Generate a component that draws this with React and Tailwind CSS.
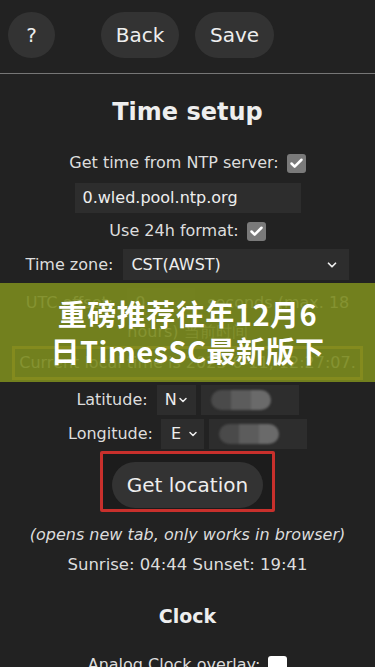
import { ChevronDown, Check } from "lucide-react"

function Btn({ children, className = "" }) {
    return (
        <button className={"h-[46px] rounded-full bg-[#333] text-[20px] text-[#eee] " + className}>
            {children}
        </button>
    )
}

function Box({ checked }) {
    return (
        <span className={"inline-flex h-[19px] w-[19px] items-center justify-center rounded-[3px] " + (checked ? "bg-[#7a7a7a]" : "bg-white")}>
            {checked && <Check size={15} strokeWidth={4} color="#fff" />}
        </span>
    )
}

// blurred coordinate value
function Blur({ w }) {
    return (
        <div className="flex h-[30px] items-center bg-[#2d2d2d] pl-[10px]" style={{ width: w }}>
            <div className="flex h-[20px] w-[60px] overflow-hidden rounded-full blur-[1px]">
                <div className="w-[20px] bg-[#4a4a4a]" />
                <div className="w-[20px] bg-[#5c5c5c]" />
                <div className="w-[20px] bg-[#6a6a6a]" />
            </div>
        </div>
    )
}

export default function App() {
    return (
        <div className="h-[667px] w-[375px] overflow-hidden bg-[#222] text-[16px] text-[#ddd] font-['DejaVu_Sans',Verdana,sans-serif]">
            <div className="flex items-center px-[8px] pt-[12px]">
                <Btn className="w-[47px]">?</Btn>
                <Btn className="ml-[46px] w-[78px]">Back</Btn>
                <Btn className="ml-[16px] w-[79px]">Save</Btn>
            </div>
            <div className="mt-[15px] h-px w-full bg-[#777]" />

            <div className="flex flex-col items-center">
                <h2 className="mt-[22px] text-[24px] font-bold text-[#eee] leading-[32px]">Time setup</h2>

                <div className="mt-[23px] flex items-center gap-[8px]">
                    <span>Get time from NTP server:</span>
                    <Box checked />
                </div>
                <div className="mt-[8px] flex h-[30px] w-[226px] items-center bg-[#2d2d2d] pl-[8px] text-[#eee]">0.wled.pool.ntp.org</div>
                <div className="mt-[6px] flex items-center gap-[8px]">
                    <span>Use 24h format:</span>
                    <Box checked />
                </div>

                <div className="mt-[6px] flex items-center gap-[10px]">
                    <span>Time zone:</span>
                    <div className="flex h-[31px] w-[226px] items-center justify-between bg-[#2d2d2d] pl-[8px] pr-[10px] text-[#eee]">
                        <span>CST(AWST)</span>
                        <ChevronDown size={14} strokeWidth={3} />
                    </div>
                </div>

                <div className="relative mt-[3px] w-full">
                    <div className="flex flex-col items-center px-[12px] pt-[5px]">
                        <div className="flex items-center">
                            <span>UTC offset:</span>
                            <div className="ml-[14px] mr-[12px] flex h-[30px] w-[68px] items-center bg-[#2d2d2d] pl-[8px]">0</div>
                            <span>seconds (max. 18</span>
                        </div>
                        <div className="mt-[2px]">hours) <span className="text-[#bbb]">当前时间</span></div>
                        <div className="mt-[2px] w-full border-[3px] border-[#d08a20] py-[2px] text-center">Current local time is 2023-6-11, 12:27:07.</div>
                    </div>
                    <div className="absolute inset-x-0 top-0 h-[99px] bg-[#7b8b1e]/90" />
                    <div className="absolute inset-x-0 top-[12px] text-center text-[29px] font-bold leading-[37px] tracking-[0.5px] text-white font-['Noto_Sans_CJK_SC',sans-serif]">
                        重磅推荐往年12月6<br />日TimesSC最新版下
                    </div>
                </div>

                <div className="mt-[5px] flex items-center">
                    <span className="mr-[9px]">Latitude:</span>
                    <div className="mr-[5px] flex h-[30px] w-[39px] items-center bg-[#2d2d2d] pl-[8px] text-[#eee]">N<ChevronDown size={12} strokeWidth={3} /></div>
                    <Blur w={98} />
                </div>
                <div className="mt-[4px] flex items-center">
                    <span className="mr-[8px]">Longitude:</span>
                    <div className="mr-[5px] flex h-[30px] w-[43px] items-center gap-[6px] bg-[#2d2d2d] pl-[10px] text-[#eee]">E<ChevronDown size={12} strokeWidth={3} /></div>
                    <Blur w={98} />
                </div>

                <div className="mt-[2px] flex h-[61px] w-[175px] items-end justify-center rounded-[2px] border-[3px] border-[#c8302c] bg-[#1c1c1c] pb-[1px]">
                    <Btn className="w-[151px]">Get location</Btn>
                </div>

                <div className="mt-[11px] italic">(opens new tab, only works in browser)</div>
                <div className="mt-[6px] text-[16.5px]">Sunrise: 04:44 Sunset: 19:41</div>

                <h3 className="mt-[24px] text-[19px] font-bold text-[#eee]">Clock</h3>
                <div className="mt-[23px] flex items-center gap-[8px]">
                    <span>Analog Clock overlay:</span>
                    <Box />
                </div>
            </div>
        </div>
    )
}
